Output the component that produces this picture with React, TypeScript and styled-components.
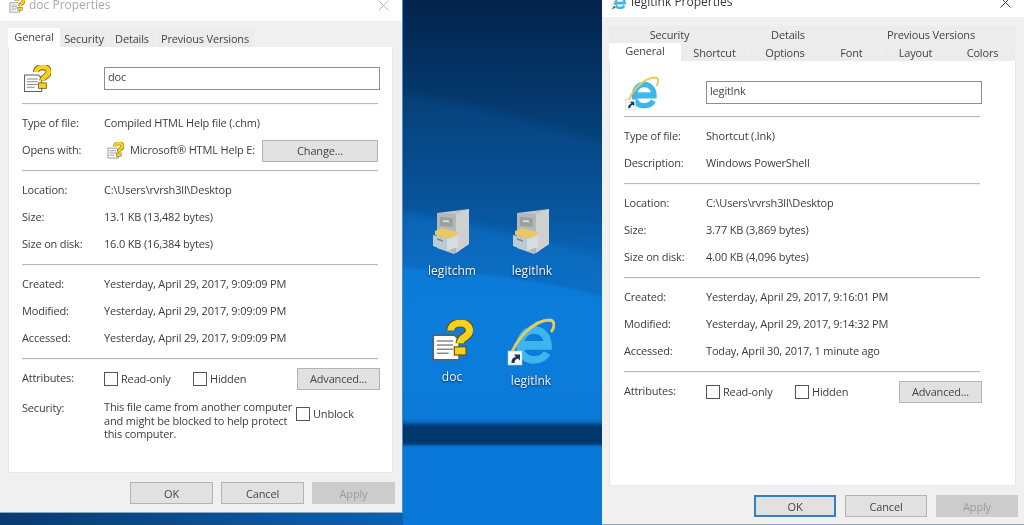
import React from "react";
import styled, { createGlobalStyle } from "styled-components";

const Global = createGlobalStyle`
  html, body { margin: 0; padding: 0; background: #0a5fb0; overflow: hidden; }
  #root { width: 1024px; height: 525px; }
  * { box-sizing: border-box; }
`;

const Screen = styled.div`
  position: relative;
  width: 1024px;
  height: 525px;
  overflow: hidden;
  font-family: "Open Sans", "Noto Sans", sans-serif;
  font-size: 11px;
  letter-spacing: -0.17px;
  color: #3c3c3c;
  filter: blur(0.4px);
`;

const Wallpaper = styled.svg`
  position: absolute;
  inset: 0;
  width: 1024px;
  height: 525px;
`;

const DesktopItem = styled.div<{ $x: number; $y: number }>`
  position: absolute;
  left: ${(p) => p.$x}px;
  top: ${(p) => p.$y}px;
  width: 80px;
  display: flex;
  flex-direction: column;
  align-items: center;
`;

const IconSlot = styled.div`
  width: 50px;
  height: 50px;
  display: flex;
  align-items: flex-end;
  justify-content: center;
`;

const DesktopLabel = styled.span`
  margin-top: 7px;
  font-size: 12px;
  line-height: 16px;
  letter-spacing: 0;
  color: #f2f7fb;
  text-shadow: 0 1px 2px #02264a;
`;

const Win = styled.section<{ $x: number; $w: number; $h: number }>`
  position: absolute;
  left: ${(p) => p.$x}px;
  top: 0;
  width: ${(p) => p.$w}px;
  height: ${(p) => p.$h}px;
  background: #f0f0f0;
  border-right: 1px solid #4a8fd0;
  border-bottom: 1px solid #8aa9c4;
  display: flex;
  flex-direction: column;
`;

const TitleBar = styled.header<{ $h: number; $pad: number; $bottom: number }>`
  flex: none;
  height: ${(p) => p.$h}px;
  padding: 0 12px ${(p) => p.$bottom}px ${(p) => p.$pad}px;
  background: #fff;
  display: flex;
  align-items: center;
  gap: 4px;
  overflow: hidden;
`;

const TitleText = styled.span<{ $active: boolean }>`
  font-size: 12px;
  line-height: 16px;
  letter-spacing: 0;
  flex: 1;
  color: ${(p) => (p.$active ? "#3a3a3a" : "#ababab")};
`;

const TabStack = styled.div<{ $top: number; $left: number }>`
  margin: ${(p) => p.$top}px 0 0 ${(p) => p.$left}px;
  display: flex;
  flex-direction: column;
  flex: none;
`;

const TabRow = styled.div<{ $h: number }>`
  height: ${(p) => p.$h}px;
  display: flex;
  align-items: flex-end;
`;

const Tab = styled.div<{ $w: number; $selected?: boolean }>`
  flex: none;
  width: ${(p) => p.$w}px;
  height: ${(p) => (p.$selected ? "100%" : "calc(100% - 1px)")};
  margin-right: ${(p) => (p.$selected ? 0 : 1)}px;
  display: flex;
  align-items: center;
  justify-content: center;
  padding-bottom: ${(p) => (p.$selected ? 3 : 0)}px;
  background: ${(p) => (p.$selected ? "#fff" : "#ececec")};
  color: #444;
`;

const Page = styled.div<{ $h: number; $left: number; $w: number; $pad: number }>`
  flex: none;
  height: ${(p) => p.$h}px;
  width: ${(p) => p.$w}px;
  margin-left: ${(p) => p.$left}px;
  padding: 20px 0 0 ${(p) => p.$pad}px;
  background: #fff;
  border: 1px solid #e6e6e6;
  border-top: 0;
`;

const PageBody = styled.div`
  width: 358px;
`;

const NameRow = styled.div<{ $gap: number }>`
  display: grid;
  grid-template-columns: 82px 276px;
  grid-template-rows: 23px;
  margin-bottom: ${(p) => p.$gap}px;
  align-items: center;
`;

const NameIcon = styled.div`
  padding-left: 1px;
  height: 23px;
  display: flex;
  align-items: center;
`;

const NameField = styled.div`
  height: 23px;
  border: 1px solid #8e8e8e;
  padding: 0 3px;
  line-height: 18px;
  color: #444;
`;

const Separator = styled.hr`
  margin: 0;
  width: 356px;
  height: 2px;
  border: 0;
  border-top: 1px solid #b9b9b9;
  border-bottom: 1px solid #f4f4f4;
`;

const Block = styled.div`
  padding: 5px 0 6px;
`;

const Row = styled.div`
  display: grid;
  grid-template-columns: 82px 1fr;
  height: 27px;
  align-items: center;
  white-space: nowrap;
`;

const RowLabel = styled.span`
  margin-top: -2px;
`;

const RowValue = styled.span`
  display: flex;
  align-items: center;
  min-width: 0;
`;

const RowText = styled.span`
  margin-top: -2px;
`;

const AppName = styled.span`
  margin: -2px 0 0 6px;
  width: 132px;
  overflow: hidden;
`;

const SmallIcon = styled.span`
  display: inline-flex;
  margin-left: 3px;
`;

const DlgButton = styled.div<{ $w: number; $kind?: "default" | "off" }>`
  flex: none;
  width: ${(p) => p.$w}px;
  height: 22px;
  display: flex;
  align-items: center;
  justify-content: center;
  background: ${(p) => (p.$kind === "off" ? "#cccccc" : "#e1e1e1")};
  color: ${(p) => (p.$kind === "off" ? "#9c9c9c" : "#444")};
  border: ${(p) =>
    p.$kind === "default"
      ? "2px solid #2f80c8"
      : p.$kind === "off"
      ? "1px solid #cccccc"
      : "1px solid #b4b4b4"};
`;

const Box = styled.span`
  flex: none;
  width: 14px;
  height: 14px;
  border: 1px solid #555;
  background: #fff;
  margin-right: 3px;
`;

const Check = styled.span<{ $w?: number }>`
  display: inline-flex;
  align-items: center;
  width: ${(p) => (p.$w ? `${p.$w}px` : "auto")};
  flex: none;
`;

const AttrSpacer = styled.span`
  flex: 1;
`;

const SecurityRow = styled.div`
  display: grid;
  grid-template-columns: 82px 192px auto;
  margin-top: 8px;
`;

const SecurityLabel = styled.span``;

const SecurityText = styled.p`
  margin: 0;
  line-height: 13.5px;
`;

const SecurityCheck = styled(Check)`
  align-self: start;
  margin-top: 6px;
`;

const Footer = styled.footer<{ $top: number; $right: number; $gap: number }>`
  display: flex;
  justify-content: flex-end;
  gap: ${(p) => p.$gap}px;
  padding: ${(p) => p.$top}px ${(p) => p.$right}px 0 0;
`;

function HelpIcon({ size }: { size: number }) {
  return (
    <svg width={size} height={size} viewBox="0 0 36 36" aria-hidden>
      <path d="M2 13 H20 L24 17 V34 H2 Z" fill="#fff" stroke="#5f5f5f" strokeWidth="1.3" />
      <path d="M5 18 H19 M5 21.5 H19 M5 25 H19 M5 28.5 H15" stroke="#8a8a8a" strokeWidth="1.3" />
      <path d="M17 9 C17 1 33 0 33 9 C33 15 25 14 25 20" fill="none" stroke="#6e5200" strokeWidth="8" />
      <path d="M17 9 C17 1 33 0 33 9 C33 15 25 14 25 20" fill="none" stroke="#f6d21e" strokeWidth="6" />
      <rect x="20" y="23" width="10" height="7" fill="#f6d21e" stroke="#6e5200" />
    </svg>
  );
}

function ShortcutBadge({ x, y, s }: { x: number; y: number; s: number }) {
  return (
    <g transform={`translate(${x} ${y}) scale(${s})`}>
      <rect width="14" height="14" fill="#f4f8fb" stroke="#b9c4cc" strokeWidth="0.6" />
      <path d="M3.5 12 C3.5 8 5 6.5 8 6 L6 3.5 H12 V9.5 L10 7.5 C8 8 6.5 9.5 6.5 12 Z" fill="#12375a" />
    </g>
  );
}

function IeIcon({ size }: { size: number }) {
  return (
    <svg width={size} height={size} viewBox="0 0 48 48" aria-hidden>
      <path
        d="M14 28 H41 C41 18 35 12 27 12 C19 12 13 19 13 28 C13 37 20 42 27 42 C33 42 38 39 40 35"
        fill="none"
        stroke="#3db6ee"
        strokeWidth="7.5"
      />
      <path d="M17 24 H37" stroke="#3db6ee" strokeWidth="2" />
      <path d="M3 40 C8 22 26 2 43 2 C49 3 47 11 44 14" fill="none" stroke="#e9cb57" strokeWidth="2.8" />
      <ShortcutBadge x={1} y={33} s={1} />
    </svg>
  );
}

function CabinetIcon() {
  return (
    <svg width="40" height="48" viewBox="0 0 40 48" aria-hidden>
      <path d="M5 5 L37 1 V36 L22 46 L5 40 Z" fill="#c3c6c6" />
      <path d="M24 6 L37 1 V36 L24 45 Z" fill="#cfd1d0" />
      <path d="M5 5 L24 6 V45 L5 39 Z" fill="#b4b7b8" />
      <path d="M8 9 L21 10 V19 L8 18 Z" fill="#9a9fa1" />
      <path d="M11 13 L17 13.5" stroke="#e6e6e6" strokeWidth="1.3" />
      <path d="M3 23 L10 20 L26 24 L26 27 L15 31 L3 27 Z" fill="#e7c766" />
      <path d="M1 27 L15 31 V43 L1 38 Z" fill="#b9ccd8" />
      <path d="M15 31 L26 27 V39 L15 43 Z" fill="#d5dde0" />
      <path d="M5 31 L11 33" stroke="#7d8688" strokeWidth="1.4" />
    </svg>
  );
}

type Info = [string, string];
type WindowProps = {
  x: number; w: number; h: number; titleH: number; titlePad: number; titleBottom: number;
  active: boolean; title: string; titleIcon: React.ReactNode;
  tabsTop: number; tabsLeft: number; tabRows: { h: number; tabs: { t: string; w: number; sel?: boolean }[] }[];
  pageH: number; pageLeft: number; pageW: number; pagePad: number; bigIcon: React.ReactNode; name: string; nameGap: number;
  typeRows: React.ReactNode; loc: Info[]; dates: Info[]; security: boolean;
  footTop: number; footRight: number; footGap: number; okDefault: boolean; btnW: number;
};

function Dialog(p: WindowProps) {
  return (
    <Win $x={p.x} $w={p.w} $h={p.h}>
      <TitleBar $h={p.titleH} $pad={p.titlePad} $bottom={p.titleBottom}>
        {p.titleIcon}
        <TitleText $active={p.active}>{p.title}</TitleText>
        <svg width="13" height="13" viewBox="0 0 13 13" aria-hidden>
          <path d="M1.5 1.5 L11.5 11.5 M11.5 1.5 L1.5 11.5" stroke={p.active ? "#444" : "#bdbdbd"} strokeWidth="1" />
        </svg>
      </TitleBar>
      <TabStack $top={p.tabsTop} $left={p.tabsLeft}>
        {p.tabRows.map((r, i) => (
          <TabRow key={i} $h={r.h}>
            {r.tabs.map((t) => (
              <Tab key={t.t} $w={t.w} $selected={t.sel}>{t.t}</Tab>
            ))}
          </TabRow>
        ))}
      </TabStack>
      <Page $h={p.pageH} $left={p.pageLeft} $w={p.pageW} $pad={p.pagePad}>
        <PageBody>
          <NameRow $gap={p.nameGap}>
            <NameIcon>{p.bigIcon}</NameIcon>
            <NameField>{p.name}</NameField>
          </NameRow>
          <Separator />
          <Block>{p.typeRows}</Block>
          <Separator />
          <Block>
            {p.loc.map(([a, b]) => (
              <Row key={a}><RowLabel>{a}</RowLabel><RowText>{b}</RowText></Row>
            ))}
          </Block>
          <Separator />
          <Block>
            {p.dates.map(([a, b]) => (
              <Row key={a}><RowLabel>{a}</RowLabel><RowText>{b}</RowText></Row>
            ))}
          </Block>
          <Separator />
          <Block>
            <Row>
              <RowLabel>Attributes:</RowLabel>
              <RowValue>
                <Check $w={89}><Box />Read-only</Check>
                <Check><Box />Hidden</Check>
                <AttrSpacer />
                <DlgButton $w={83}>Advanced...</DlgButton>
              </RowValue>
            </Row>
            {p.security && (
              <SecurityRow>
                <SecurityLabel>Security:</SecurityLabel>
                <SecurityText>
                  This file came from another computer
                  <br />
                  and might be blocked to help protect
                  <br />
                  this computer.
                </SecurityText>
                <SecurityCheck><Box />Unblock</SecurityCheck>
              </SecurityRow>
            )}
          </Block>
        </PageBody>
      </Page>
      <Footer $top={p.footTop} $right={p.footRight} $gap={p.footGap}>
        <DlgButton $w={p.btnW} $kind={p.okDefault ? "default" : undefined}>OK</DlgButton>
        <DlgButton $w={p.btnW}>Cancel</DlgButton>
        <DlgButton $w={p.btnW} $kind="off">Apply</DlgButton>
      </Footer>
    </Win>
  );
}

const rows = (a: Info, b: React.ReactNode, bl: string) => (
  <>
    <Row><RowLabel>{a[0]}</RowLabel><RowText>{a[1]}</RowText></Row>
    <Row><RowLabel>{bl}</RowLabel><RowValue>{b}</RowValue></Row>
  </>
);

export default function App() {
  return (
    <Screen>
      <Global />
      <Wallpaper viewBox="0 0 1024 525" aria-hidden>
        <defs>
          <linearGradient id="wall" x1="0" y1="0" x2="0" y2="1">
            <stop offset="0" stopColor="#03234c" />
            <stop offset="0.2" stopColor="#053a70" />
            <stop offset="0.4" stopColor="#07559c" />
            <stop offset="0.52" stopColor="#0a6cc0" />
            <stop offset="0.6" stopColor="#0a78d4" />
            <stop offset="0.8" stopColor="#096cc4" />
            <stop offset="1" stopColor="#0878d6" />
          </linearGradient>
          <linearGradient id="strip" x1="0" y1="0" x2="1" y2="0">
            <stop offset="0" stopColor="#0b3a70" />
            <stop offset="1" stopColor="#0a62b4" />
          </linearGradient>
          <filter id="soft" x="-10%" y="-20%" width="120%" height="140%">
            <feGaussianBlur stdDeviation="4" />
          </filter>
          <filter id="softer" x="-10%" y="-20%" width="120%" height="140%">
            <feGaussianBlur stdDeviation="1.5" />
          </filter>
        </defs>
        <rect width="1024" height="525" fill="url(#wall)" />
        <path d="M403 95 C470 100 540 125 602 142 V215 H403 Z" fill="#0c5aa4" opacity="0.25" filter="url(#soft)" />
        <path d="M403 212 C470 222 540 240 602 258 V300 H403 Z" fill="#0b6ec4" opacity="0.6" filter="url(#soft)" />
        <path d="M403 268 C470 270 540 280 602 296 V420 H403 Z" fill="#0a80e0" opacity="0.7" filter="url(#softer)" />
        <rect x="403" y="445" width="200" height="80" fill="#0a78d8" />
        <rect x="390" y="424" width="225" height="21" fill="#05396e" filter="url(#softer)" />
        <rect x="0" y="513" width="403" height="12" fill="url(#strip)" />
      </Wallpaper>

      <DesktopItem $x={412} $y={206}>
        <IconSlot><CabinetIcon /></IconSlot>
        <DesktopLabel>legitchm</DesktopLabel>
      </DesktopItem>
      <DesktopItem $x={492} $y={206}>
        <IconSlot><CabinetIcon /></IconSlot>
        <DesktopLabel>legitlnk</DesktopLabel>
      </DesktopItem>
      <DesktopItem $x={412} $y={312}>
        <IconSlot><HelpIcon size={42} /></IconSlot>
        <DesktopLabel>doc</DesktopLabel>
      </DesktopItem>
      <DesktopItem $x={491} $y={316}>
        <IconSlot><IeIcon size={48} /></IconSlot>
        <DesktopLabel>legitlnk</DesktopLabel>
      </DesktopItem>

      <Dialog
        x={0} w={403} h={513} titleH={21} titlePad={9} titleBottom={11} active={false}
        title="doc Properties" titleIcon={<HelpIcon size={16} />}
        tabsTop={7} tabsLeft={8}
        tabRows={[{ h: 19, tabs: [
          { t: "General", w: 52, sel: true },
          { t: "Security", w: 48 }, { t: "Details", w: 46 }, { t: "Previous Versions", w: 98 },
        ] }]}
        pageH={426} pageLeft={8} pageW={385} pagePad={13}
        bigIcon={<HelpIcon size={28} />} name="doc" nameGap={13}
        typeRows={rows(["Type of file:", "Compiled HTML Help file (.chm)"],
          <>
            <SmallIcon><HelpIcon size={17} /></SmallIcon>
            <AppName>Microsoft® HTML Help E:</AppName>
            <DlgButton $w={116}>Change...</DlgButton>
          </>, "Opens with:")}
        loc={[["Location:", "C:\\Users\\rvrsh3ll\\Desktop"], ["Size:", "13.1 KB (13,482 bytes)"], ["Size on disk:", "16.0 KB (16,384 bytes)"]]}
        dates={[["Created:", "Yesterday, April 29, 2017, 9:09:09 PM"], ["Modified:", "Yesterday, April 29, 2017, 9:09:09 PM"], ["Accessed:", "Yesterday, April 29, 2017, 9:09:09 PM"]]}
        security footTop={9} footRight={7} footGap={8} okDefault={false} btnW={83}
      />

      <Dialog
        x={602} w={423} h={525} titleH={17} titlePad={9} titleBottom={13} active
        title="legitlnk Properties" titleIcon={<IeIcon size={16} />}
        tabsTop={8} tabsLeft={7}
        tabRows={[
          { h: 18, tabs: [{ t: "Security", w: 121 }, { t: "Details", w: 114 }, { t: "Previous Versions", w: 170 }] },
          { h: 18, tabs: [
            { t: "General", w: 72, sel: true }, { t: "Shortcut", w: 67 }, { t: "Options", w: 72 },
            { t: "Font", w: 59 }, { t: "Layout", w: 67 }, { t: "Colors", w: 65 },
          ] },
        ]}
        pageH={425} pageLeft={7} pageW={407} pagePad={14}
        bigIcon={<IeIcon size={34} />} name="legitlnk" nameGap={12}
        typeRows={rows(["Type of file:", "Shortcut (.lnk)"], <RowText>Windows PowerShell</RowText>, "Description:")}
        loc={[["Location:", "C:\\Users\\rvrsh3ll\\Desktop"], ["Size:", "3.77 KB (3,869 bytes)"], ["Size on disk:", "4.00 KB (4,096 bytes)"]]}
        dates={[["Created:", "Yesterday, April 29, 2017, 9:16:01 PM"], ["Modified:", "Yesterday, April 29, 2017, 9:14:32 PM"], ["Accessed:", "Today, April 30, 2017, 1 minute ago"]]}
        security={false} footTop={9} footRight={6} footGap={9} okDefault btnW={82}
      />
    </Screen>
  );
}
